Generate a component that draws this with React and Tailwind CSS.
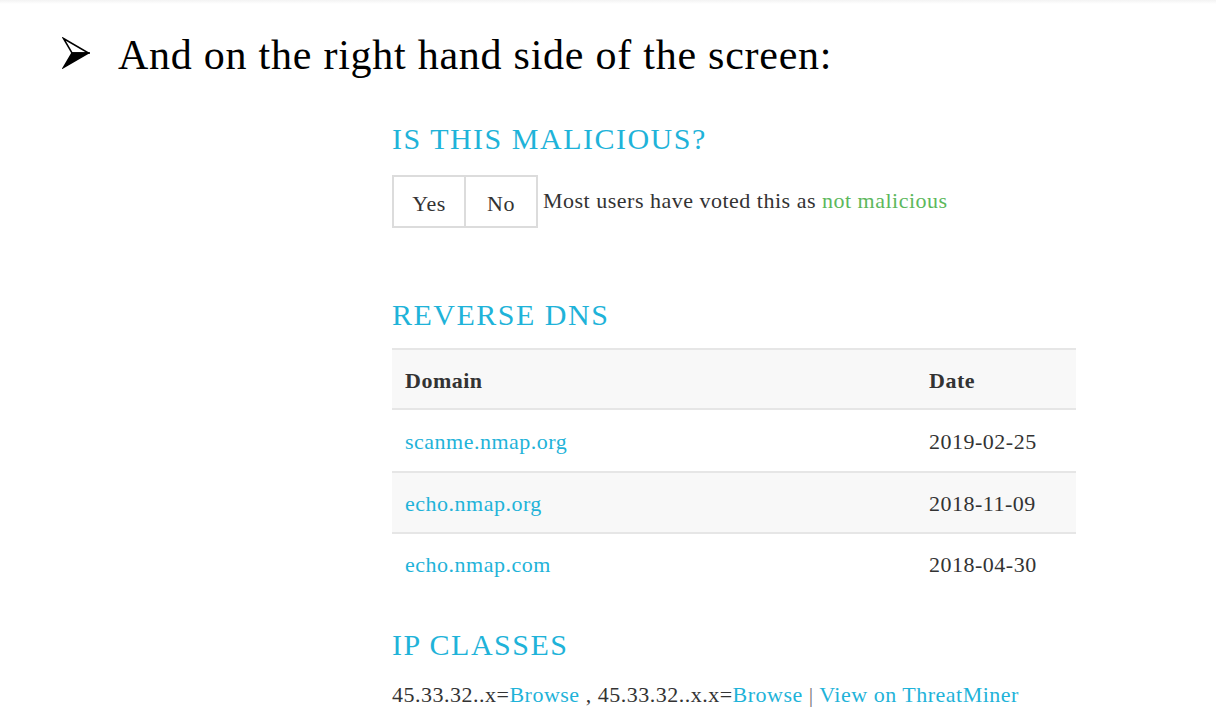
const cyan = "text-[#1fb3d9]";

function Bullet() {
  return (
    <svg width="28" height="32" viewBox="0 0 28 32" className="shrink-0">
      <polygon points="1.5,1.5 26.5,16 10,16" fill="#fff" stroke="#000" strokeWidth="1.5" strokeLinejoin="miter" />
      <polygon points="10,16 26.5,16 1.5,30.5" fill="#000" stroke="#000" strokeWidth="1.5" />
    </svg>
  );
}

function Heading({ children }) {
  return (
    <h2 className={`text-[30px] leading-[30px] tracking-[1.5px] ${cyan}`}>{children}</h2>
  );
}

const rows = [
  { domain: "scanme.nmap.org", date: "2019-02-25" },
  { domain: "echo.nmap.org", date: "2018-11-09" },
  { domain: "echo.nmap.com", date: "2018-04-30" },
];

export default function App() {
  return (
    <div
      className="w-[1216px] h-[716px] overflow-hidden bg-white text-black"
      style={{ fontFamily: '"Liberation Serif", "Times New Roman", serif' }}
    >
      <div className="h-[4px] bg-gradient-to-b from-[#f3f3f3] to-white" />

      {/* bullet line */}
      <div className="flex h-[40px] items-center mt-[29px] pl-[62px]">
        <Bullet />
        <p className="ml-[28px] mt-[4px] text-[42px] leading-[40px] tracking-[0.75px]">And on the right hand side of the screen:</p>
      </div>

      {/* embedded page */}
      <div className="ml-[392px] w-[684px] pt-[51px] text-[22px] tracking-[0.5px] text-[#333]">
        <Heading>IS THIS MALICIOUS?</Heading>

        <div className="mt-[21px] flex items-center">
          <div className="flex h-[53px] border-2 border-[#dcdcdc]">
            <div className="flex w-[72px] items-center justify-center border-r-2 border-[#dcdcdc] pt-[3px]">Yes</div>
            <div className="flex w-[70px] items-center justify-center pt-[3px]">No</div>
          </div>
          <p className="ml-[5px] leading-[30px] pb-[2px]">
            Most users have voted this as <span className="text-[#5cb85c]">not malicious</span>
          </p>
        </div>

        <div className="mt-[72px]">
          <Heading>REVERSE DNS</Heading>
        </div>

        <div className="mt-[18px] border-t-2 border-[#e6e6e6]">
          <div className="grid h-[60px] grid-cols-[524px_1fr] items-center border-b-2 border-[#e6e6e6] bg-[#f8f8f8] font-bold text-[#333]">
            <div className="pl-[13px] pt-[2px]">Domain</div>
            <div className="pl-[13px] pt-[2px]">Date</div>
          </div>
          {rows.map((r, i) => (
            <div
              key={r.domain}
              className={`grid grid-cols-[524px_1fr] items-center ${i === 0 ? "h-[61px]" : "h-[61px] border-t-2 border-[#e6e6e6]"} ${i === 1 ? "bg-[#f8f8f8]" : "bg-white"}`}
            >
              <a className={`pl-[13px] pt-[2px] ${cyan}`}>{r.domain}</a>
              <div className="pl-[13px] pt-[2px]">{r.date}</div>
            </div>
          ))}
        </div>

        <div className="mt-[37px]">
          <Heading>IP CLASSES</Heading>
        </div>

        <p className="mt-[20px] leading-[30px] whitespace-nowrap">
          45.33.32..x=<a className={cyan}>Browse</a> , 45.33.32..x.x=<a className={cyan}>Browse</a>{" "}
          <span className="text-[#777]">|</span> <a className={cyan}>View on ThreatMiner</a>
        </p>
      </div>
    </div>
  );
}
